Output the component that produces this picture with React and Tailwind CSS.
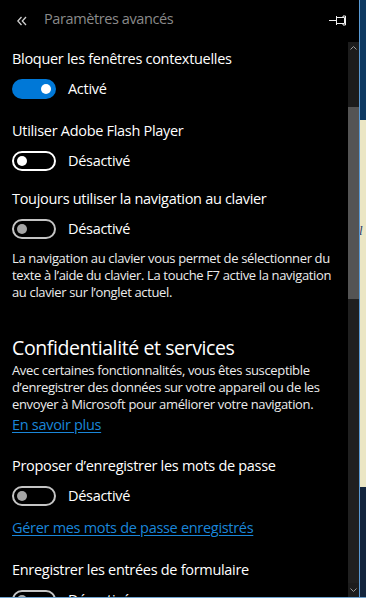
import { useState } from 'react';

const FONT = { fontFamily: '"Open Sans", "Noto Sans", sans-serif' };

function Toggle({ on, dim }) {
  if (on) {
    return (
      <div className="w-[44px] h-[20px] rounded-full bg-[#0078d7] flex items-center justify-end pr-[5px] shrink-0">
        <div className="w-[10px] h-[10px] rounded-full bg-white" />
      </div>
    );
  }
  return (
    <div className={`w-[44px] h-[20px] rounded-full border-2 flex items-center pl-[3px] shrink-0 ${dim ? 'border-[#c4c4c4]' : 'border-white'}`}>
      <div className={`w-[10px] h-[10px] rounded-full ${dim ? 'bg-[#a6a6a6]' : 'bg-white'}`} />
    </div>
  );
}

function Setting({ label, on, dim, className = '' }) {
  return (
    <div className={className}>
      <p className="text-[14.5px] leading-[20px] text-white tracking-[-0.3px]">{label}</p>
      <div className="flex items-center gap-3 mt-[10px]">
        <Toggle on={on} dim={dim} />
        <span className="text-[14.5px] leading-[20px] text-white tracking-[-0.3px]">{on ? 'Activé' : 'Désactivé'}</span>
      </div>
    </div>
  );
}

export default function App() {
  const [scroll] = useState(0);

  return (
    <div style={FONT} className="relative w-[366px] h-[598px] flex bg-black overflow-hidden border-b border-[#6fa3cf]">
      <div className="w-[348px] flex flex-col">
        {/* header */}
        <div className="h-[42px] flex items-center pl-[17px] pr-[20px] shrink-0">
          <svg width="10" height="10" viewBox="0 0 10 10" fill="none" stroke="#d0d0d0" strokeWidth="1.3">
            <polyline points="4.5,1 0.8,5 4.5,9" />
            <polyline points="9,1 5.3,5 9,9" />
          </svg>
          <span className="ml-[17px] text-[14.5px] text-[#8a8a8a] tracking-[-0.4px] -mt-[4px]">Paramètres avancés</span>
        </div>

        {/* content */}
        <div className="flex-1 overflow-hidden pl-3 pr-2" style={{ marginTop: -scroll }}>
          <Setting className="mt-[7px]" label="Bloquer les fenêtres contextuelles" on />
          <Setting className="mt-[22px]" label="Utiliser Adobe Flash Player" />
          <Setting className="mt-[18px]" label="Toujours utiliser la navigation au clavier" dim />
          <p className="mt-[11px] text-[13px] leading-[17px] text-[#ececec] tracking-[-0.35px]">
            La navigation au clavier vous permet de sélectionner du texte à l’aide du clavier. La touche F7 active la navigation au clavier sur l’onglet actuel.
          </p>

          <h2 className="mt-[34px] text-[19.5px] leading-[26px] text-white tracking-[-0.4px]">Confidentialité et services</h2>
          <p className="mt-[1px] text-[13px] leading-[17px] text-[#ececec] tracking-[-0.35px]">
            Avec certaines fonctionnalités, vous êtes susceptible d’enregistrer des données sur votre appareil ou de les envoyer à Microsoft pour améliorer votre navigation.
          </p>
          <a className="block mt-[2px] text-[14.5px] leading-[20px] text-[#1a86d9] underline underline-offset-2 tracking-[-0.3px]">En savoir plus</a>

          <Setting className="mt-[21px]" label="Proposer d’enregistrer les mots de passe" dim />
          <a className="block mt-[12px] text-[14.5px] leading-[20px] text-[#1a86d9] underline underline-offset-2 tracking-[-0.3px]">Gérer mes mots de passe enregistrés</a>

          <Setting className="mt-[22px]" label="Enregistrer les entrées de formulaire" dim />
        </div>
      </div>

      {/* scrollbar */}
      <div className="w-[11px] flex flex-col pt-[42px]">
        <div className="flex-1 bg-[#1c1c1c] flex flex-col">
          <div className="h-[12px] flex items-center justify-center">
            <svg width="7" height="4" viewBox="0 0 7 4" fill="none" stroke="#9a9a9a" strokeWidth="1">
              <polyline points="0.5,3.5 3.5,0.5 6.5,3.5" />
            </svg>
          </div>
          <div className="h-[53px] bg-[#1c1c1c]" />
          <div className="h-[192px] bg-[#545454]" />
          <div className="flex-1 bg-[#202020]" />
          <div className="h-[14px] flex items-center justify-center">
            <svg width="7" height="4" viewBox="0 0 7 4" fill="none" stroke="#9a9a9a" strokeWidth="1">
              <polyline points="0.5,0.5 3.5,3.5 6.5,0.5" />
            </svg>
          </div>
        </div>
      </div>

      {/* background page strip */}
      <div className="w-[7px] flex flex-col border-l border-[#5b9bd5]">
        <div className="h-[120px] bg-[#0e3a62]" />
        <div className="h-[367px] bg-[#ebe6c4] relative overflow-hidden">
          <span className="absolute left-[-1px] top-[104px] text-[13px] italic text-[#2a3a6a] leading-none" style={{ fontFamily: '"Liberation Serif", serif' }}>l</span>
        </div>
        <div className="flex-1 bg-[#14253d]" />
      </div>

      {/* pin */}
      <div className="absolute left-[329px] top-[14px]">
        <svg width="17" height="12" viewBox="0 0 17 12" fill="none" stroke="#f0f0f0" strokeWidth="1">
          <line x1="0" y1="6.5" x2="7" y2="6.5" />
          <line x1="7.5" y1="2" x2="7.5" y2="11" />
          <path d="M7.5 3.5 H15.5 V9.5 H7.5" />
          <path d="M14 3.5 V2 H16.5 V11 H14 V9.5" />
        </svg>
      </div>
    </div>
  );
}
